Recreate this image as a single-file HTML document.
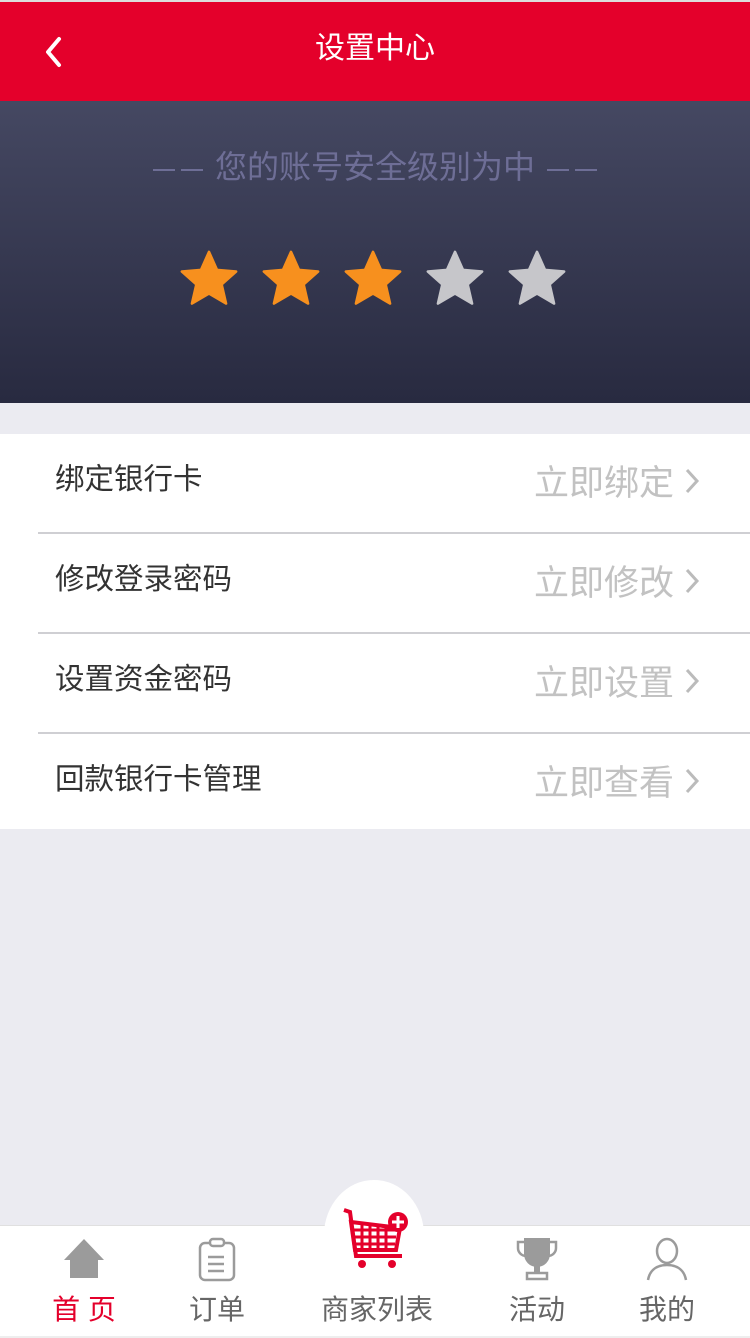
<!DOCTYPE html>
<html><head><meta charset="utf-8"><style>
*{margin:0;padding:0;box-sizing:border-box}
body{width:750px;height:1338px;background:#ebebf1;font-family:"Liberation Sans","Noto Sans CJK SC",sans-serif;position:relative;overflow:hidden}
.top{position:absolute;top:0;left:0;width:750px;height:2px;background:#ddd}
.hdr{position:absolute;top:2px;left:0;width:750px;height:99px;background:#e4002b;color:#fff;text-align:center;font-size:30px;line-height:94px}
.back{position:absolute;left:42px;top:34px}
.ban{position:absolute;top:101px;left:0;width:750px;height:302px;background:linear-gradient(#454862,#282a40)}
.sub{position:absolute;top:46px;width:100%;text-align:center;color:#6e6e96;font-size:32px;line-height:40px}
.d{display:inline-block;width:22px;height:2px;background:#6e6e96;vertical-align:middle;margin:0 3px}
.stars{position:absolute;top:147px;left:0;width:750px}
.stars svg{position:absolute;top:0}
.list{position:absolute;top:434px;left:0;width:750px;height:395px;background:#fff}
.row{position:absolute;left:0;width:750px;height:100px}
.row .l{position:absolute;left:55px;top:22px;font-size:29.5px;color:#333}
.row .r{position:absolute;right:76px;top:21px;font-size:35px;color:#c2c2c2}
.row svg{position:absolute;right:50px;top:33px}
.sep{position:absolute;left:38px;right:0;height:2px;background:#cfcfd3}
.nav{position:absolute;top:1225px;left:0;width:750px;height:111px;background:#fff;border-top:1px solid #e0e0e0}
.circ{position:absolute;left:324px;top:1180px;width:100px;height:110px;border-radius:50%;background:#fff}
.lab{position:absolute;top:1288px;font-size:28px;color:#666;transform:translateX(-50%);white-space:nowrap}
.bot{position:absolute;top:1336px;left:0;width:750px;height:2px;background:#eee}
</style></head><body>
<div class="top"></div>
<div class="hdr">设置中心
<svg class="back" width="24" height="32" viewBox="0 0 24 32"><path d="M17 3 L6 16 L17 29" stroke="#fff" stroke-width="4" fill="none" stroke-linecap="round" stroke-linejoin="round"/></svg></div>
<div class="ban">
<div class="sub"><span class="d"></span><span class="d"></span> 您的账号安全级别为中 <span class="d"></span><span class="d"></span></div>
<div class="stars">
<svg style="left:178px" width="62" height="62" viewBox="0 0 24 24"><path d="M12 1.5l3.1 7 7.4.6-5.6 5 1.7 7.4L12 17.6l-6.6 3.9 1.7-7.4-5.6-5 7.4-.6z" fill="#f7901e" stroke="#f7901e" stroke-linejoin="round"/></svg>
<svg style="left:260px" width="62" height="62" viewBox="0 0 24 24"><path d="M12 1.5l3.1 7 7.4.6-5.6 5 1.7 7.4L12 17.6l-6.6 3.9 1.7-7.4-5.6-5 7.4-.6z" fill="#f7901e" stroke="#f7901e" stroke-linejoin="round"/></svg>
<svg style="left:342px" width="62" height="62" viewBox="0 0 24 24"><path d="M12 1.5l3.1 7 7.4.6-5.6 5 1.7 7.4L12 17.6l-6.6 3.9 1.7-7.4-5.6-5 7.4-.6z" fill="#f7901e" stroke="#f7901e" stroke-linejoin="round"/></svg>
<svg style="left:424px" width="62" height="62" viewBox="0 0 24 24"><path d="M12 1.5l3.1 7 7.4.6-5.6 5 1.7 7.4L12 17.6l-6.6 3.9 1.7-7.4-5.6-5 7.4-.6z" fill="#c6c6ca" stroke="#c6c6ca" stroke-linejoin="round"/></svg>
<svg style="left:506px" width="62" height="62" viewBox="0 0 24 24"><path d="M12 1.5l3.1 7 7.4.6-5.6 5 1.7 7.4L12 17.6l-6.6 3.9 1.7-7.4-5.6-5 7.4-.6z" fill="#c6c6ca" stroke="#c6c6ca" stroke-linejoin="round"/></svg>
</div></div>
<div class="list">
<div class="row" style="top:0"><span class="l">绑定银行卡</span><span class="r">立即绑定</span><svg width="16" height="28" viewBox="0 0 16 28"><path d="M3 3l10 11-10 11" stroke="#bbb" stroke-width="3" fill="none"/></svg></div>
<div class="sep" style="top:98px"></div>
<div class="row" style="top:100px"><span class="l">修改登录密码</span><span class="r">立即修改</span><svg width="16" height="28" viewBox="0 0 16 28"><path d="M3 3l10 11-10 11" stroke="#bbb" stroke-width="3" fill="none"/></svg></div>
<div class="sep" style="top:198px"></div>
<div class="row" style="top:200px"><span class="l">设置资金密码</span><span class="r">立即设置</span><svg width="16" height="28" viewBox="0 0 16 28"><path d="M3 3l10 11-10 11" stroke="#bbb" stroke-width="3" fill="none"/></svg></div>
<div class="sep" style="top:298px"></div>
<div class="row" style="top:300px"><span class="l">回款银行卡管理</span><span class="r">立即查看</span><svg width="16" height="28" viewBox="0 0 16 28"><path d="M3 3l10 11-10 11" stroke="#bbb" stroke-width="3" fill="none"/></svg></div>
</div>
<div class="nav"></div>
<div class="circ"></div>
<svg style="position:absolute;left:62px;top:1238px" width="44" height="42" viewBox="0 0 44 42"><path d="M22 1 L42 22 H36 V40 H8 V22 H2 Z" fill="#9b9b9b" stroke-linejoin="round"/></svg>
<svg style="position:absolute;left:196px;top:1237px" width="42" height="46" viewBox="0 0 42 46"><rect x="4" y="6" width="34" height="37" rx="5" fill="none" stroke="#9b9b9b" stroke-width="2.5"/><rect x="14" y="2" width="14" height="7" rx="3" fill="#fff" stroke="#9b9b9b" stroke-width="2.5"/><path d="M12 20h16M12 27h16M12 34h16" stroke="#9b9b9b" stroke-width="2.5"/></svg>
<svg style="position:absolute;left:340px;top:1206px" width="72" height="66" viewBox="0 0 72 66"><path d="M4 4 L10 6 L16 50 H62" stroke="#e4002b" stroke-width="4" fill="none"/><path d="M11 16 L60 22 L56 44 H15 Z" fill="none" stroke="#e4002b" stroke-width="4"/><path d="M13 24h44M14 31h42M15 38h40M22 17v27M30 18v26M38 19v25M46 20v24" stroke="#e4002b" stroke-width="3"/><circle cx="22" cy="58" r="4" fill="#e4002b"/><circle cx="52" cy="58" r="4" fill="#e4002b"/><circle cx="58" cy="16" r="10" fill="#e4002b"/><path d="M58 10v12M52 16h12" stroke="#fff" stroke-width="3"/></svg>
<svg style="position:absolute;left:514px;top:1236px" width="46" height="46" viewBox="0 0 46 46"><path d="M10 2h26v16a13 13 0 0 1-26 0z" fill="#9b9b9b"/><path d="M10 6H4v6a8 8 0 0 0 8 8M36 6h6v6a8 8 0 0 1-8 8" stroke="#9b9b9b" stroke-width="2.5" fill="none"/><rect x="20" y="30" width="6" height="8" fill="#9b9b9b"/><rect x="13" y="37" width="20" height="6" fill="none" stroke="#9b9b9b" stroke-width="2.5"/></svg>
<svg style="position:absolute;left:646px;top:1237px" width="42" height="46" viewBox="0 0 42 46"><ellipse cx="21" cy="14" rx="10" ry="12" fill="none" stroke="#9b9b9b" stroke-width="2.5"/><path d="M2 43 C4 32 12 28 21 28 C30 28 38 32 40 43" fill="none" stroke="#9b9b9b" stroke-width="2.5"/></svg>
<span class="lab" style="left:84px;color:#e4002b">首 页</span>
<span class="lab" style="left:217px">订单</span>
<span class="lab" style="left:377px">商家列表</span>
<span class="lab" style="left:537px">活动</span>
<span class="lab" style="left:667px">我的</span>
<div class="bot"></div>
</body></html>
